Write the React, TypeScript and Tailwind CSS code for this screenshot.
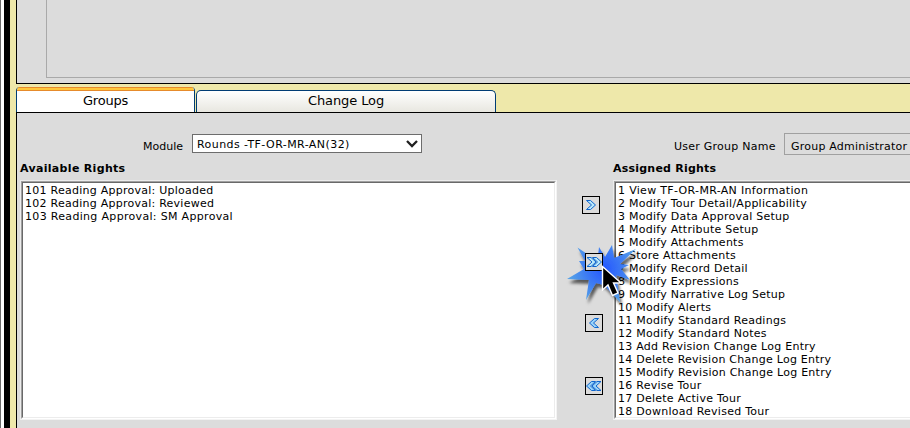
import React from "react";

const available = [
  "101 Reading Approval: Uploaded",
  "102 Reading Approval: Reviewed",
  "103 Reading Approval: SM Approval",
];

const assigned = [
  "1 View TF-OR-MR-AN Information",
  "2 Modify Tour Detail/Applicability",
  "3 Modify Data Approval Setup",
  "4 Modify Attribute Setup",
  "5 Modify Attachments",
  "6 Store Attachments",
  "7 Modify Record Detail",
  "8 Modify Expressions",
  "9 Modify Narrative Log Setup",
  "10 Modify Alerts",
  "11 Modify Standard Readings",
  "12 Modify Standard Notes",
  "13 Add Revision Change Log Entry",
  "14 Delete Revision Change Log Entry",
  "15 Modify Revision Change Log Entry",
  "16 Revise Tour",
  "17 Delete Active Tour",
  "18 Download Revised Tour",
];

function ListBox({ items, className }: { items: string[]; className: string }) {
  return (
    <div className={`h-[240px] shrink-0 border border-t-[#ececec] border-l-[#ececec] border-r-[#f3f3f3] border-b-[#f3f3f3] ${className}`}>
      <div className="h-full border border-t-[#a0a0a0] border-l-[#a0a0a0] border-r-white border-b-white">
        <ul className="h-full border border-t-[#696969] border-l-[#696969] border-r-[#ececec] border-b-[#ececec] bg-white pl-[2px] pt-px tracking-[0.25px]">
          {items.map((t) => (
            <li key={t} className={`h-[13px] whitespace-pre leading-[14px] ${t.includes("-") || t.includes("SM") ? "tracking-[0.32px]" : ""}`}>{t}</li>
          ))}
        </ul>
      </div>
    </div>
  );
}

function Chevron({ x, flip }: { x: number; flip?: boolean }) {
  return (
    <path
      d="M0.5 3.5H4.5L9.5 8L4.5 12.5H0.5L5.5 8Z"
      transform={flip ? `translate(${16 - x} 0) scale(-1 1)` : `translate(${x} 0)`}
      fill={flip ? "#9ad4fa" : "#b9e8fb"}
      stroke="#0f66cf"
      strokeWidth="1"
    />
  );
}

function MoveButton({ double, flip, className }: { double?: boolean; flip?: boolean; className: string }) {
  return (
    <button className={`relative z-10 block h-[18px] w-[18px] border border-black bg-[#dcdcdc] ${className}`}>
      <svg width="16" height="16" viewBox="0 0 16 16" className="block">
        {double ? (
          <>
            <Chevron x={0.5} flip={flip} />
            <Chevron x={6} flip={flip} />
          </>
        ) : (
          <Chevron x={3} flip={flip} />
        )}
      </svg>
    </button>
  );
}

export default function App() {
  return (
    <div className="flex h-[428px] w-[910px] overflow-hidden bg-[#eee8aa] text-[11px] text-black [font-family:Verdana,'DejaVu_Sans',sans-serif]">
      <div className="w-px shrink-0 bg-[#6d6d6d]" />
      <div className="w-[3px] shrink-0 bg-white" />
      <div className="w-[6px] shrink-0 bg-black" />
      <div className="w-[6px] shrink-0" />
      <main className="flex w-[894px] shrink-0 flex-col">
        <section className="h-[84px] shrink-0 border-b border-l border-black bg-[#dcdcdc] pl-[29px]">
          <div className="h-[78px] border-b border-l border-[#a9a9a9]" />
        </section>

        <nav className="flex h-[28px] shrink-0 items-end text-[13px]">
          <div className="h-[25px] w-[179px] overflow-hidden rounded-t-[4px] border-x border-[#003c74] bg-white">
            <div className="-mx-px h-[4px] border-y border-t-[#e68b2c] border-b-[#e68b2c] bg-[#ffc73c]" />
            <div className="pt-px text-center leading-[18px] tracking-[-0.2px]">Groups</div>
          </div>
          <div className="ml-px h-[22px] w-[300px] rounded-t-[5px] border border-b-0 border-[#003c74] bg-gradient-to-b from-white to-[#e8e7e0] text-center leading-[20px] tracking-[-0.1px]">
            Change Log
          </div>
        </nav>

        <section className="h-[316px] shrink-0 border-l border-t border-black bg-[#dcdcdc]">
          <div className="flex h-[48px] pt-[20px]">
            <label className="ml-[126px] w-[49px] shrink-0 pt-[7px] leading-[14px]">Module</label>
            <div className="mt-px flex h-[19px] w-[230px] shrink-0 items-center justify-between border border-[#6d6d6d] bg-white pl-[4px] pr-[3px]">
              <span className="pt-[2px] leading-[14px] tracking-[0.43px]">Rounds -TF-OR-MR-AN(32)</span>
              <svg width="12" height="8" viewBox="0 0 12 8">
                <path d="M1 1L6 6L11 1" fill="none" stroke="#202020" strokeWidth="2.3" />
              </svg>
            </div>
            <label className="ml-[252px] w-[110px] shrink-0 whitespace-nowrap pt-[7px] leading-[14px] tracking-[0.25px]">User Group Name</label>
            <div className="h-[22px] w-[160px] shrink-0 whitespace-nowrap border border-[#a0a0a0] pl-[6px] pt-[6px] leading-[14px] tracking-[0.22px]">Group Administrator</div>
          </div>
          <div className="flex h-[19px] pt-px font-bold leading-[14px]">
            <h2 className="w-[593px] shrink-0 pl-[3px] tracking-[0.32px]">Available Rights</h2>
            <h2 className="pl-[3px] tracking-[0.22px]">Assigned Rights</h2>
          </div>
          <div className="flex pl-[3px]">
            <ListBox items={available} className="w-[537px]" />
            <div className="relative w-[56px] shrink-0 pt-[16px]">
              <MoveButton className="ml-[25px]" />
              <MoveButton double className="ml-[28px] mt-[39px]" />
              <MoveButton flip className="ml-[28px] mt-[43px]" />
              <MoveButton double flip className="ml-[28px] mt-[45px]" />
              <svg className="pointer-events-none absolute left-[3px] top-[60px] z-[5] overflow-visible" width="84" height="76" viewBox="560 240 84 76">
                <defs>
                  <radialGradient id="burst" gradientUnits="userSpaceOnUse" cx="604" cy="269" r="34">
                    <stop offset="0" stopColor="#2457ff" />
                    <stop offset="0.5" stopColor="#3b78f4" />
                    <stop offset="1" stopColor="#55a0e8" />
                  </radialGradient>
                  <filter id="shade" x="-30%" y="-30%" width="160%" height="160%">
                    <feDropShadow dx="2" dy="4" stdDeviation="1.8" floodOpacity="0.6" />
                  </filter>
                </defs>
                <path filter="url(#shade)" fill="url(#burst)" d="M577.5 247.5L590 256L598 256L599 247L605 257L612 245L614 258L636 249L620 264L629 265L621 269L630 280L616 275L620 302L604 285L596 283L586 300L589 280L567 279L584 269L579 261L585 261Z" />
              </svg>
              <svg className="pointer-events-none absolute left-[44px] top-[86px] z-20 overflow-visible" width="24" height="32" viewBox="0 0 24 32">
                <path d="M1.5 0.5V24L7 19L11.5 29.5L17 27L12.5 17H20Z" fill="black" stroke="white" strokeWidth="1.4" />
              </svg>
            </div>
            <ListBox items={assigned} className="w-[380px]" />
          </div>
        </section>
      </main>
    </div>
  );
}
